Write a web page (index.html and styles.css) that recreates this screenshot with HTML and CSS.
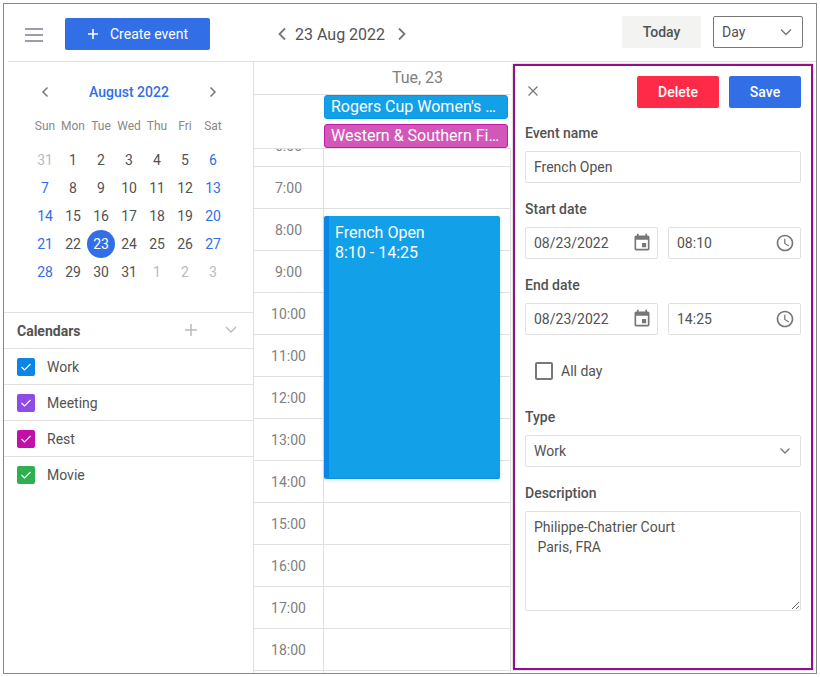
FILE: index.html
```html
<!DOCTYPE html>
<html lang="en">
<head>
    <meta charset="UTF-8">
    <title>Calendar</title>
    <link rel="stylesheet" href="styles.css">
</head>
<body>
<div class="app">
    <header class="toolbar">
        <div class="menu-icon"><i></i><i></i><i></i></div>
        <button class="btn btn-create">
            <svg class="icon-plus" width="12" height="12" viewBox="0 0 12 12"><path d="M6 1v10M1 6h10" stroke="#fff" stroke-width="1.6" fill="none"/></svg>
            Create event
        </button>
        <div class="date-nav">
            <svg width="10" height="14" viewBox="0 0 10 14"><path d="M8 1.5 2.5 7 8 12.5" stroke="#777" stroke-width="1.8" fill="none"/></svg>
            <span>23 Aug 2022</span>
            <svg width="10" height="14" viewBox="0 0 10 14"><path d="M2 1.5 7.5 7 2 12.5" stroke="#777" stroke-width="1.8" fill="none"/></svg>
        </div>
        <button class="btn btn-today">Today</button>
        <div class="view-select">
            <span>Day</span>
            <svg width="12" height="8" viewBox="0 0 12 8"><path d="M1 1.5 6 6.5 11 1.5" stroke="#777" stroke-width="1.4" fill="none"/></svg>
        </div>
    </header>

    <div class="main">
        <aside class="sidebar">
            <section class="mini-cal">
                <div class="month-head">
                    <svg width="8" height="12" viewBox="0 0 8 12"><path d="M6.5 1.5 2 6l4.5 4.5" stroke="#777" stroke-width="1.5" fill="none"/></svg>
                    <span>August 2022</span>
                    <svg width="8" height="12" viewBox="0 0 8 12"><path d="M1.5 1.5 6 6l-4.5 4.5" stroke="#777" stroke-width="1.5" fill="none"/></svg>
                </div>
                <div class="weekdays">
                    <span>Sun</span><span>Mon</span><span>Tue</span><span>Wed</span><span>Thu</span><span>Fri</span><span>Sat</span>
                </div>
                <div class="days">
                    <span class="out">31</span><span>1</span><span>2</span><span>3</span><span>4</span><span>5</span><span class="weekend">6</span>
                    <span class="weekend">7</span><span>8</span><span>9</span><span>10</span><span>11</span><span>12</span><span class="weekend">13</span>
                    <span class="weekend">14</span><span>15</span><span>16</span><span>17</span><span>18</span><span>19</span><span class="weekend">20</span>
                    <span class="weekend">21</span><span>22</span><span class="selected">23</span><span>24</span><span>25</span><span>26</span><span class="weekend">27</span>
                    <span class="weekend">28</span><span>29</span><span>30</span><span>31</span><span class="out">1</span><span class="out">2</span><span class="out">3</span>
                </div>
            </section>

            <section class="calendars">
                <div class="calendars-head">
                    <h2>Calendars</h2>
                    <svg class="cal-plus" width="14" height="14" viewBox="0 0 14 14"><path d="M7 1v12M1 7h12" stroke="#bbb" stroke-width="1.5" fill="none"/></svg>
                    <svg class="cal-chevron" width="12" height="8" viewBox="0 0 12 8"><path d="M1 1 6 6l5-5" stroke="#bbb" stroke-width="1.4" fill="none"/></svg>
                </div>
                <div class="cal-row">
                    <span class="check check-work"><svg width="12" height="10" viewBox="0 0 12 10"><path d="M1.5 5 4.5 8l6-6" stroke="#fff" stroke-width="1.1" fill="none"/></svg></span>Work
                </div>
                <div class="cal-row">
                    <span class="check check-meeting"><svg width="12" height="10" viewBox="0 0 12 10"><path d="M1.5 5 4.5 8l6-6" stroke="#fff" stroke-width="1.1" fill="none"/></svg></span>Meeting
                </div>
                <div class="cal-row">
                    <span class="check check-rest"><svg width="12" height="10" viewBox="0 0 12 10"><path d="M1.5 5 4.5 8l6-6" stroke="#fff" stroke-width="1.1" fill="none"/></svg></span>Rest
                </div>
                <div class="cal-row">
                    <span class="check check-movie"><svg width="12" height="10" viewBox="0 0 12 10"><path d="M1.5 5 4.5 8l6-6" stroke="#fff" stroke-width="1.1" fill="none"/></svg></span>Movie
                </div>
            </section>
        </aside>

        <section class="schedule">
            <div class="day-title">Tue, 23</div>
            <div class="all-day">
                <div class="chip chip-blue">Rogers Cup Women's Open</div>
                <div class="chip chip-pink">Western &amp; Southern Financial</div>
            </div>
            <div class="scroller">
                <div class="times">
                    <div class="slot">6:00</div>
                    <div class="slot">7:00</div>
                    <div class="slot">8:00</div>
                    <div class="slot">9:00</div>
                    <div class="slot">10:00</div>
                    <div class="slot">11:00</div>
                    <div class="slot">12:00</div>
                    <div class="slot">13:00</div>
                    <div class="slot">14:00</div>
                    <div class="slot">15:00</div>
                    <div class="slot">16:00</div>
                    <div class="slot">17:00</div>
                    <div class="slot">18:00</div>
                    <div class="slot"></div>
                </div>
                <div class="day-col">
                    <div class="slot"></div><div class="slot"></div><div class="slot"></div><div class="slot"></div>
                    <div class="slot"></div><div class="slot"></div><div class="slot"></div><div class="slot"></div>
                    <div class="slot"></div><div class="slot"></div><div class="slot"></div><div class="slot"></div>
                    <div class="slot"></div><div class="slot"></div>
                    <div class="event">French Open<br>8:10 - 14:25</div>
                </div>
            </div>
        </section>

        <form class="editor">
            <div class="editor-head">
                <svg class="close" width="12" height="12" viewBox="0 0 12 12"><path d="M1.5 1.5l9 9M10.5 1.5l-9 9" stroke="#777" stroke-width="1.2" fill="none"/></svg>
                <button type="button" class="btn btn-delete">Delete</button>
                <button type="button" class="btn btn-save">Save</button>
            </div>

            <div class="field">
                <label>Event name</label>
                <div class="input">French Open</div>
            </div>

            <div class="field">
                <label>Start date</label>
                <div class="pair">
                    <div class="input">08/23/2022
                        <svg width="20" height="20" viewBox="0 0 24 24"><path fill="#777" d="M17 12h-5v5h5v-5zM16 1v2H8V1H6v2H5c-1.11 0-1.99.9-1.99 2L3 19c0 1.1.89 2 2 2h14c1.1 0 2-.9 2-2V5c0-1.1-.9-2-2-2h-1V1h-2zm3 18H5V8h14v11z"/></svg>
                    </div>
                    <div class="input">08:10
                        <svg width="20" height="20" viewBox="0 0 24 24"><path fill="#777" d="M11.99 2C6.47 2 2 6.48 2 12s4.47 10 9.99 10C17.52 22 22 17.52 22 12S17.52 2 11.99 2zM12 20c-4.42 0-8-3.58-8-8s3.58-8 8-8 8 3.58 8 8-3.58 8-8 8zM12.5 7H11v6l5.25 3.15.75-1.23-4.5-2.67z"/></svg>
                    </div>
                </div>
            </div>

            <div class="field">
                <label>End date</label>
                <div class="pair">
                    <div class="input">08/23/2022
                        <svg width="20" height="20" viewBox="0 0 24 24"><path fill="#777" d="M17 12h-5v5h5v-5zM16 1v2H8V1H6v2H5c-1.11 0-1.99.9-1.99 2L3 19c0 1.1.89 2 2 2h14c1.1 0 2-.9 2-2V5c0-1.1-.9-2-2-2h-1V1h-2zm3 18H5V8h14v11z"/></svg>
                    </div>
                    <div class="input">14:25
                        <svg width="20" height="20" viewBox="0 0 24 24"><path fill="#777" d="M11.99 2C6.47 2 2 6.48 2 12s4.47 10 9.99 10C17.52 22 22 17.52 22 12S17.52 2 11.99 2zM12 20c-4.42 0-8-3.58-8-8s3.58-8 8-8 8 3.58 8 8-3.58 8-8 8zM12.5 7H11v6l5.25 3.15.75-1.23-4.5-2.67z"/></svg>
                    </div>
                </div>
            </div>

            <div class="all-day-row">
                <span class="box"></span>All day
            </div>

            <div class="field field-type">
                <label>Type</label>
                <div class="input">Work
                    <svg class="type-chevron" width="12" height="8" viewBox="0 0 12 8"><path d="M1.5 1.5 6 6l4.5-4.5" stroke="#777" stroke-width="1.3" fill="none"/></svg>
                </div>
            </div>

            <div class="field">
                <label>Description</label>
                <textarea class="textarea">Philippe-Chatrier Court
 Paris, FRA</textarea>
            </div>
        </form>
    </div>
</div>
</body>
</html>
```

FILE: styles.css
```css
* {
    box-sizing: border-box;
}

body {
    margin: 0;
    background: #fff;
    font-family: Roboto, "Liberation Sans", sans-serif;
    font-size: 14px;
    color: #525252;
    overflow: hidden;
}

.app {
    width: 814px;
    height: 671px;
    margin: 3px;
    border: 1px solid #888;
    display: flex;
    flex-direction: column;
    overflow: hidden;
}

/* top bar */
.toolbar {
    height: 58px;
    flex: none;
    margin-left: 4px;
    padding: 12px 13px 0 17px;
    border-bottom: 1px solid #e0e0e0;
    display: flex;
    align-items: flex-start;
}

.menu-icon {
    width: 18px;
    margin: 12px 22px 0 0;
    display: flex;
    flex-direction: column;
    gap: 4px;
}

.menu-icon i {
    display: block;
    height: 2px;
    background: #9a9ca8;
}

.btn {
    height: 32px;
    border: 0;
    border-radius: 2px;
    font-family: inherit;
    font-size: 14px;
    font-weight: 500;
    color: #fff;
    padding: 0;
}

.btn-create {
    width: 145px;
    margin-top: 2px;
    background: #326ee6;
    font-weight: 400;
    display: flex;
    align-items: center;
    justify-content: center;
    gap: 11px;
}

.date-nav {
    display: flex;
    align-items: center;
    height: 32px;
    margin: 2px 0 0 67px;
    font-size: 16px;
    gap: 8px;
}

.date-nav span {
    margin-right: 4px;
}

.btn-today {
    width: 79px;
    margin-left: auto;
    background: #f3f3f2;
    color: #525252;
}

.view-select {
    width: 90px;
    height: 32px;
    margin-left: 12px;
    padding: 0 10px 0 8px;
    border: 1px solid #777;
    border-radius: 2px;
    display: flex;
    align-items: center;
    justify-content: space-between;
}

.main {
    flex: 1;
    display: flex;
    min-height: 0;
}

/* left column */
.sidebar {
    width: 250px;
    flex: none;
    border-right: 1px solid #e0e0e0;
}

.mini-cal {
    height: 250px;
    padding: 16px 0 0 27px;
}

.month-head {
    width: 196px;
    height: 28px;
    display: grid;
    grid-template-columns: 28px 1fr 28px;
    align-items: center;
    justify-items: center;
    font-weight: 500;
    color: #326ee6;
}

.weekdays, .days {
    width: 196px;
    display: grid;
    grid-template-columns: repeat(7, 28px);
    text-align: center;
}

.weekdays {
    height: 28px;
    margin-top: 6px;
    line-height: 28px;
    font-size: 12px;
    color: #888;
}

.days {
    margin-top: 6px;
    grid-auto-rows: 28px;
    line-height: 29px;
}

.days .out {
    color: #bbb;
}

.days .weekend {
    color: #326ee6;
}

.days .selected {
    background: #326ee6;
    color: #fff;
    border-radius: 50%;
}

.calendars-head {
    height: 37px;
    padding: 0 16px 0 13px;
    border-top: 1px solid #e0e0e0;
    border-bottom: 1px solid #e0e0e0;
    display: flex;
    align-items: center;
}

.calendars-head h2 {
    margin: 0;
    flex: 1;
    font-size: 14px;
    font-weight: 700;
}

.cal-plus {
    margin: -2px 27px 0 0;
}

.cal-chevron {
    margin-top: -2px;
}

.cal-row {
    height: 36px;
    padding-left: 13px;
    border-bottom: 1px solid #e0e0e0;
    display: flex;
    align-items: center;
    gap: 12px;
}

.cal-row:last-child {
    border-bottom: 0;
}

.check {
    width: 18px;
    height: 18px;
    border-radius: 2px;
    display: flex;
    align-items: center;
    justify-content: center;
}

.check-work { background: #0a86e8; }
.check-meeting { background: #8f4be8; }
.check-rest { background: #c20fa8; }
.check-movie { background: #2fb050; }

/* day view */
.schedule {
    width: 257px;
    flex: none;
    display: flex;
    flex-direction: column;
    min-height: 0;
}

.day-title {
    height: 33px;
    flex: none;
    padding: 2px 0 0 70px;
    border-bottom: 1px solid #e0e0e0;
    text-align: center;
    line-height: 28px;
    font-size: 16px;
    color: #808080;
}

.all-day {
    height: 54px;
    flex: none;
    padding-left: 70px;
    padding-right: 3px;
    border-bottom: 1px solid #e0e0e0;
    display: flex;
    flex-direction: column;
    gap: 5px;
    position: relative;
    z-index: 1;
}

.chip {
    height: 24px;
    padding: 0 6px;
    border: 1px solid;
    border-radius: 3px;
    line-height: 22px;
    font-size: 16px;
    color: #fff;
    white-space: nowrap;
    overflow: hidden;
    text-overflow: ellipsis;
}

.chip-blue {
    background: #12a0e8;
    border-color: #0a96e8;
}

.chip-pink {
    background: #d257b8;
    border-color: #c219a8;
}

.scroller {
    flex: 1;
    display: flex;
    overflow: hidden;
}

.times, .day-col {
    margin-top: -24px;
}

.times {
    width: 70px;
    flex: none;
    border-right: 1px solid #e0e0e0;
    text-align: center;
    color: #808080;
}

.day-col {
    flex: 1;
    border-right: 1px solid #e0e0e0;
    position: relative;
}

.slot {
    height: 42px;
    border-bottom: 1px solid #e0e0e0;
    line-height: 43px;
}

.event {
    position: absolute;
    top: 91px;
    left: 0;
    width: 176px;
    height: 263px;
    padding: 7px 6px;
    background: #12a0e8;
    border-left: 5px solid #0a86e8;
    border-bottom: 1px solid #0e8fdc;
    border-radius: 2px;
    box-shadow: 0 1px 4px rgba(0, 0, 0, 0.15);
    color: #fff;
    font-size: 16px;
    line-height: 20px;
}

/* edit panel */
.editor {
    width: 300px;
    height: 606px;
    margin: 2px 0 0 2px;
    padding: 10px;
    border: 2px solid #930e8a;
    box-shadow: 0 0 2px rgba(0, 0, 0, 0.35);
    flex: none;
}

.editor-head {
    height: 32px;
    display: flex;
    align-items: center;
}

.close {
    margin: -2px auto 0 2px;
}

.btn-delete {
    width: 82px;
    background: #ff2a48;
}

.btn-save {
    width: 72px;
    margin-left: 10px;
    background: #326ee6;
}

.field {
    margin-top: 16px;
}

.editor-head + .field {
    margin-top: 15px;
}

.field label {
    display: block;
    margin-bottom: 8px;
    line-height: 20px;
    font-weight: 500;
}

.input {
    height: 32px;
    padding: 0 5px 0 8px;
    border: 1px solid #e0e0e0;
    border-radius: 2px;
    display: flex;
    align-items: center;
    justify-content: space-between;
}

.pair {
    display: grid;
    grid-template-columns: 133px 133px;
    gap: 10px;
}

.type-chevron {
    margin-right: 4px;
}

.all-day-row {
    height: 18px;
    margin: 27px 0 0 10px;
    display: flex;
    align-items: center;
    gap: 8px;
}

.box {
    width: 18px;
    height: 18px;
    border: 2px solid #777;
    border-radius: 2px;
}

.field-type {
    margin-top: 27px;
}

.textarea {
    display: block;
    width: 100%;
    height: 100px;
    padding: 5px 8px;
    border: 1px solid #e0e0e0;
    border-radius: 2px;
    outline: 0;
    font-family: inherit;
    font-size: 14px;
    line-height: 20px;
    color: #525252;
}
```
